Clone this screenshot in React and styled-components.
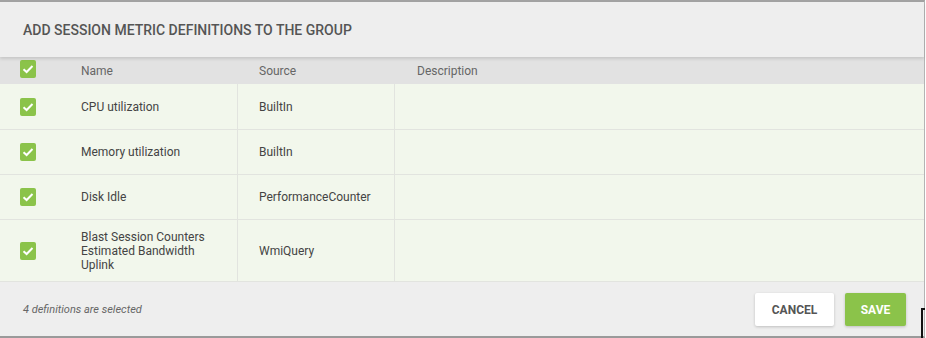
import React from 'react';
import styled, { createGlobalStyle } from 'styled-components';

const Global = createGlobalStyle`
  html, body {
    margin: 0;
    padding: 0;
    background: #fff;
  }
  body {
    font-family: Roboto, "Liberation Sans", Arial, sans-serif;
  }
`;

const Dialog = styled.div`
  position: relative;
  width: 925px;
  height: 338px;
  box-sizing: border-box;
  border-top: 2px solid #a2a2a2;
  border-bottom: 2px solid #9a9a9a;
  border-right: 1px solid #b4b4b4;
  background: #eeeeee;
  display: flex;
  flex-direction: column;
  overflow: visible;
`;

const Header = styled.div`
  height: 55px;
  flex: none;
  display: flex;
  align-items: center;
  padding: 0 23px;
  background: #eeeeee;
  box-shadow: 0 2px 3px rgba(0, 0, 0, 0.12);
  position: relative;
  z-index: 1;
`;

const Title = styled.h2`
  margin: 0;
  font-size: 14px;
  font-weight: 500;
  color: #555;
  text-transform: uppercase;
`;

const Grid = styled.div`
  display: grid;
  grid-template-columns: 58px 179px 157px 1fr;
  background: ${(p) => (p.head ? '#e2e2e2' : '#f2f7ec')};
  height: ${(p) => p.h}px;
  flex: none;
  box-sizing: border-box;
  border-bottom: ${(p) => (p.head ? 'none' : '1px solid #e2e4df')};
`;

const Cell = styled.div`
  display: flex;
  align-items: center;
  padding: 0 22px 0 ${(p) => (p.first ? 20 : p.pad || 23)}px;
  font-size: 12px;
  line-height: 14px;
  color: ${(p) => (p.head ? '#666' : '#444')};
  border-left: ${(p) => (p.sep ? '1px solid #e2e4df' : 'none')};
`;

const Check = styled.span`
  width: 18px;
  height: 18px;
  border-radius: 2px;
  background: #8bc34a;
  display: inline-flex;
  align-items: center;
  justify-content: center;
  margin-top: ${(p) => (p.head ? -4 : 0)}px;
`;

const Footer = styled.div`
  flex: 1;
  display: flex;
  align-items: center;
  padding: 0 18px 0 23px;
  background: #eeeeee;
`;

const Note = styled.span`
  font-size: 11px;
  font-style: italic;
  color: #666;
`;

const Actions = styled.div`
  margin-left: auto;
  display: flex;
  gap: 11px;
  margin-top: 1px;
`;

const Btn = styled.button`
  height: 33px;
  padding: 0 15px;
  border: none;
  border-radius: 2px;
  font-family: inherit;
  font-size: 12px;
  font-weight: 700;
  background: ${(p) => (p.primary ? '#8bc34a' : '#fff')};
  color: ${(p) => (p.primary ? '#fff' : '#555')};
  box-shadow: 0 1px 3px rgba(0, 0, 0, 0.2);
  min-width: ${(p) => (p.primary ? 61 : 79)}px;
`;

const Cursor = styled.div`
  position: absolute;
  right: -1px;
  bottom: -2px;
  width: 2px;
  height: 28px;
  border-left: 2px solid #111;
  border-top: 2px solid #111;
`;

const Tick = () => (
  <svg width="12" height="10" viewBox="0 0 12 10">
    <path d="M1.5 5.2 L4.6 8 L10.5 2" fill="none" stroke="#fff" strokeWidth="2" />
  </svg>
);

const rows = [
  { name: 'CPU utilization', source: 'BuiltIn', h: 46 },
  { name: 'Memory utilization', source: 'BuiltIn', h: 45 },
  { name: 'Disk Idle', source: 'PerformanceCounter', h: 45 },
  { name: 'Blast Session Counters Estimated Bandwidth Uplink', source: 'WmiQuery', h: 62 },
];

export default function App() {
  return (
    <>
      <Global />
      <Dialog>
        <Header>
          <Title>Add session metric definitions to the group</Title>
        </Header>

        <Grid head h={27}>
          <Cell first>
            <Check head>
              <Tick />
            </Check>
          </Cell>
          <Cell head>Name</Cell>
          <Cell head pad={22}>Source</Cell>
          <Cell head>Description</Cell>
        </Grid>

        {rows.map((r) => (
          <Grid key={r.name} h={r.h}>
            <Cell first>
              <Check>
                <Tick />
              </Check>
            </Cell>
            <Cell>{r.name}</Cell>
            <Cell sep pad={21}>{r.source}</Cell>
            <Cell sep />
          </Grid>
        ))}

        <Footer>
          <Note>4 definitions are selected</Note>
          <Actions>
            <Btn>CANCEL</Btn>
            <Btn primary>SAVE</Btn>
          </Actions>
        </Footer>
        <Cursor />
      </Dialog>
    </>
  );
}
